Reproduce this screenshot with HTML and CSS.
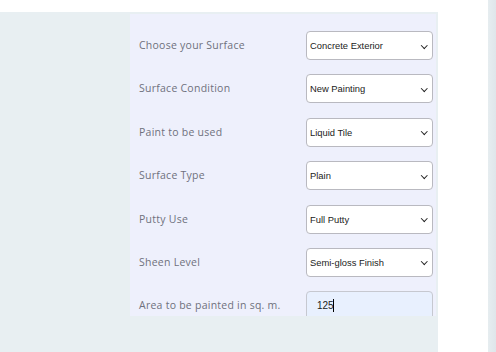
FILE: index.html
```html
<!DOCTYPE html>
<html>
<head>
<meta charset="utf-8">
<link rel="stylesheet" href="styles.css">
</head>
<body>
<div class="page">
  <div class="main">
    <div class="topbar"></div>
    <div class="stage">
      <div class="panel">
        <div class="row">
          <label class="lbl">Choose your Surface</label>
          <div class="selwrap"><select class="sel"><option>Concrete Exterior</option></select></div>
        </div>
        <div class="row">
          <label class="lbl">Surface Condition</label>
          <div class="selwrap"><select class="sel"><option>New Painting</option></select></div>
        </div>
        <div class="row">
          <label class="lbl">Paint to be used</label>
          <div class="selwrap"><select class="sel"><option>Liquid Tile</option></select></div>
        </div>
        <div class="row">
          <label class="lbl">Surface Type</label>
          <div class="selwrap"><select class="sel"><option>Plain</option></select></div>
        </div>
        <div class="row">
          <label class="lbl">Putty Use</label>
          <div class="selwrap"><select class="sel"><option>Full Putty</option></select></div>
        </div>
        <div class="row">
          <label class="lbl">Sheen Level</label>
          <div class="selwrap"><select class="sel"><option>Semi-gloss Finish</option></select></div>
        </div>
        <div class="row">
          <label class="lbl">Area to be painted in sq. m.</label>
          <div class="inputwrap">
            <input class="inp" type="text" value="125">
            <span class="caret"></span>
          </div>
        </div>
      </div>
    </div>
  </div>
  <div class="gutter"></div>
  <div class="scroll"></div>
</div>
</body>
</html>
```
FILE: styles.css
```css
* { box-sizing: border-box; }
html, body { margin: 0; padding: 0; background: #fff; }
.page {
  display: flex;
  width: 496px;
  height: 352px;
  overflow: hidden;
}
.main {
  width: 438px;
  display: flex;
  flex-direction: column;
}
.topbar { height: 12px; background: #fff; }
.stage {
  flex: 1;
  background: #e8eff2;
  padding: 2px 2px 0 130px;
}
.panel {
  width: 306px;
  height: 302px;
  background: #eef0fc;
  overflow: hidden;
  padding: 17px 3px 0 9px;
}
.row {
  display: flex;
  justify-content: space-between;
  align-items: center;
  height: 29px;
  margin-bottom: 14.4px;
}
.lbl {
  font-family: "Open Sans", sans-serif;
  font-size: 10.5px;
  letter-spacing: 0.25px;
  color: #6e717c;
  padding-bottom: 1px;
}
.selwrap { position: relative; }
.selwrap::after {
  content: "";
  position: absolute;
  right: 7px;
  top: 11.5px;
  width: 3.5px;
  height: 3.5px;
  border-right: 1.6px solid #222;
  border-bottom: 1.6px solid #222;
  transform: rotate(45deg);
  pointer-events: none;
}
.sel {
  -webkit-appearance: none;
  appearance: none;
  display: block;
  width: 127px;
  height: 29px;
  font-family: "Liberation Sans", Arial, sans-serif;
  font-size: 9.4px;
  color: #222;
  background: #fff;
  border: 1px solid #b9b9c0;
  border-radius: 4px;
  padding: 0 0 0 3px;
  outline: none;
}
.inputwrap { position: relative; }
.inp {
  display: block;
  width: 127px;
  height: 29px;
  font-family: "Liberation Sans", Arial, sans-serif;
  font-size: 10px;
  color: #222;
  background: #e8f0fe;
  border: 1px solid #c6c8d0;
  border-radius: 4px;
  padding: 0 0 0 10px;
  outline: none;
}
.caret {
  position: absolute;
  left: 27px;
  top: 8px;
  width: 1px;
  height: 13px;
  background: #000;
}
.gutter { width: 50px; background: #fff; }
.scroll {
  width: 8px;
  background: linear-gradient(to right, #e6edf0, #dfe6ea);
}
```
